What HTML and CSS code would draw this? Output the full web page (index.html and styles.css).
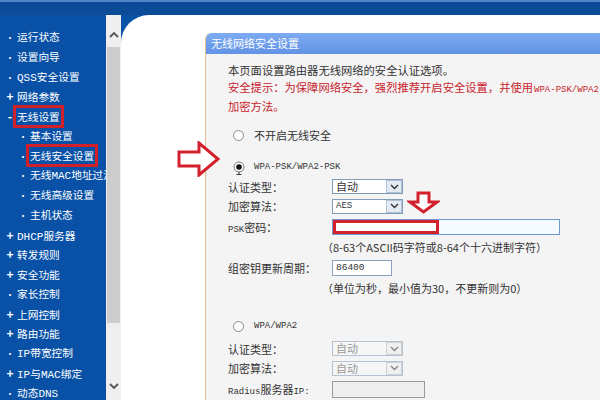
FILE: index.html
```html
<!DOCTYPE html>
<html lang="zh-CN">
<head>
  <meta charset="UTF-8">
  <meta name="viewport" content="width=device-width, initial-scale=1">
  <title>无线网络安全设置</title>
  <link rel="stylesheet" href="styles.css">
</head>
<body>
  <div class="topbar"></div>
  <div class="layout">
    <ul class="menu">
      <li><span class="mark">•</span>运行状态</li>
      <li><span class="mark">•</span>设置向导</li>
      <li><span class="mark">•</span><span class="en">QSS</span>安全设置</li>
      <li><span class="mark plus">+</span>网络参数</li>
      <li><span class="mark plus">-</span><span class="boxed">无线设置</span></li>
      <li class="sub"><span class="mark">•</span>基本设置</li>
      <li class="sub"><span class="mark">•</span><span class="boxed">无线安全设置</span></li>
      <li class="sub"><span class="mark">•</span>无线<span class="en">MAC</span>地址过滤</li>
      <li class="sub"><span class="mark">•</span>无线高级设置</li>
      <li class="sub"><span class="mark">•</span>主机状态</li>
      <li><span class="mark plus">+</span><span class="en">DHCP</span>服务器</li>
      <li><span class="mark plus">+</span>转发规则</li>
      <li><span class="mark plus">+</span>安全功能</li>
      <li><span class="mark">•</span>家长控制</li>
      <li><span class="mark plus">+</span>上网控制</li>
      <li><span class="mark plus">+</span>路由功能</li>
      <li><span class="mark">•</span><span class="en">IP</span>带宽控制</li>
      <li><span class="mark plus">+</span><span class="en">IP</span>与<span class="en">MAC</span>绑定</li>
      <li><span class="mark">•</span>动态<span class="en">DNS</span></li>
    </ul>

    <div class="scroll">
      <svg class="scroll-arrow" width="10" height="7" viewBox="0 0 10 7"><polyline points="1,6 5,2 9,6" fill="none" stroke="#555" stroke-width="1.8"/></svg>
      <div class="thumb"></div>
      <svg class="scroll-arrow down" width="10" height="7" viewBox="0 0 10 7"><polyline points="1,1 5,5 9,1" fill="none" stroke="#555" stroke-width="1.8"/></svg>
    </div>

    <div class="main">
      <div class="panel">
        <div class="panel-head">无线网络安全设置</div>
        <div class="panel-body">
          <p class="intro">本页面设置路由器无线网络的安全认证选项。</p>
          <p class="intro warn">安全提示：为保障网络安全，强烈推荐开启安全设置，并使用<span class="en">WPA-PSK/WPA2-PSK AES</span></p>
          <p class="intro warn">加密方法。</p>

          <div class="radio-row first">
            <span class="radio"></span>
            <span>不开启无线安全</span>
          </div>

          <div class="radio-row second">
            <svg class="radio-on" width="12" height="14" viewBox="0 0 12 14">
              <circle cx="6" cy="6" r="5" fill="#fff" stroke="#777" stroke-width="1"/>
              <circle cx="6" cy="6" r="2.8" fill="#111"/>
              <line x1="6" y1="11" x2="6" y2="13.5" stroke="#333" stroke-width="1"/>
              <line x1="3.5" y1="13.5" x2="8.5" y2="13.5" stroke="#333" stroke-width="1"/>
            </svg>
            <span class="en">WPA-PSK/WPA2-PSK</span>
          </div>

          <div class="field">
            <span class="label">认证类型：</span>
            <div class="select"><span class="val">自动</span><span class="btn"><svg width="9" height="6" viewBox="0 0 9 6"><polyline points="1,1 4.5,4.5 8,1" fill="none" stroke="#333" stroke-width="1.4"/></svg></span></div>
          </div>
          <div class="field">
            <span class="label">加密算法：</span>
            <div class="select"><span class="val en">AES</span><span class="btn"><svg width="9" height="6" viewBox="0 0 9 6"><polyline points="1,1 4.5,4.5 8,1" fill="none" stroke="#333" stroke-width="1.4"/></svg></span></div>
          </div>
          <div class="field tall">
            <span class="label"><span class="en">PSK</span>密码：</span>
            <div class="input psk"><span class="hide"></span></div>
          </div>
          <div class="note">（8-63个ASCII码字符或8-64个十六进制字符）</div>
          <div class="field mid">
            <span class="label">组密钥更新周期：</span>
            <div class="input period en">86400</div>
          </div>
          <div class="note">（单位为秒，最小值为30，不更新则为0）</div>

          <div class="radio-row third">
            <span class="radio"></span>
            <span class="en">WPA/WPA2</span>
          </div>

          <div class="field gap">
            <span class="label">认证类型：</span>
            <div class="select off"><span class="val">自动</span><span class="btn"><svg width="9" height="6" viewBox="0 0 9 6"><polyline points="1,1 4.5,4.5 8,1" fill="none" stroke="#888" stroke-width="1.4"/></svg></span></div>
          </div>
          <div class="field">
            <span class="label">加密算法：</span>
            <div class="select off"><span class="val">自动</span><span class="btn"><svg width="9" height="6" viewBox="0 0 9 6"><polyline points="1,1 4.5,4.5 8,1" fill="none" stroke="#888" stroke-width="1.4"/></svg></span></div>
          </div>
          <div class="field radius">
            <span class="label"><span class="en">Radius</span>服务器<span class="en">IP:</span></span>
            <div class="input server"></div>
          </div>
          <div class="field radius">
            <span class="label"><span class="en">Radius</span>端口:</span>
            <div class="input port"></div>
            <span class="hint">（1-65535，0表示默认端口：1812）</span>
          </div>
        </div>
      </div>
    </div>
  </div>

  <!-- red marks drawn over the screenshot -->
  <svg class="arrow-right" width="44" height="36" viewBox="0 0 44 36">
    <polygon points="2,11 22,11 22,2 41,18 22,34 22,25 2,25" fill="#fff" stroke="#d3202d" stroke-width="3" stroke-linejoin="miter"/>
  </svg>
  <svg class="arrow-down" width="33" height="24" viewBox="0 0 33 24">
    <polygon points="11,2 22,2 22,11 30,11 16.5,21 3,11 11,11" fill="#fff" stroke="#d3202d" stroke-width="3"/>
  </svg>
</body>
</html>
```

FILE: styles.css
```css
* {
  box-sizing: border-box;
}

body {
  margin: 0;
  height: 400px;
  overflow: hidden;
  background: #0851a6;
  font-family: "Noto Sans CJK SC", "Noto Sans", sans-serif;
  font-size: 11px;
  color: #333;
}

.en {
  font-family: "Liberation Mono", monospace;
}

.topbar {
  height: 15px;
  background: #0c4b97;
  border-top: 2px solid #4f87c6;
}

.layout {
  display: flex;
  height: 385px;
}

/* left menu */
.menu {
  width: 106px;
  margin: 0;
  padding: 12px 0 0 3px;
  list-style: none;
  overflow: hidden;
  white-space: nowrap;
  color: #fff;
  font-size: 10.7px;
}

.menu li {
  height: 19.78px;
  line-height: 19.78px;
}

.menu li.sub {
  padding-left: 13px;
}

.menu .en {
  font-size: 11px;
}

.mark {
  display: inline-block;
  width: 14px;
  text-align: center;
  font-size: 9px;
}

.mark.plus {
  font-size: 12px;
  font-weight: bold;
}

.boxed {
  outline: 3px solid #d2202b;
  outline-offset: 1px;
}

/* scrollbar */
.scroll {
  width: 15px;
  background: #efefef;
  display: flex;
  flex-direction: column;
  align-items: center;
  padding: 16px 0 10px;
}

.thumb {
  width: 13px;
  height: 276px;
  margin-top: 9px;
  background: #cdcdcd;
}

.scroll-arrow.down {
  margin-top: auto;
}

/* main area */
.main {
  flex: 1;
  background: #fff;
  border-top-left-radius: 28px;
  padding: 18px 0 0 84px;
  overflow: hidden;
}

.panel {
  width: 560px;
  height: 400px;
  background: #f4f4f4;
  border-left: 1px solid #e2bf91;
  border-top-left-radius: 6px;
}

.panel-head {
  height: 21px;
  line-height: 21px;
  padding-left: 5px;
  color: #fff;
  background: linear-gradient(#7dabf2, #6393e6);
  border-top-left-radius: 6px;
}

.panel-body {
  padding: 8px 0 0 22px;
  white-space: nowrap;
}

.intro {
  margin: 0;
  line-height: 16.5px;
  font-size: 11.3px;
}

.warn {
  color: #c8232c;
}

.warn .en {
  font-size: 9px;
  margin-left: 1px;
}

.radio-row {
  display: flex;
  align-items: center;
  height: 20px;
  padding-left: 5px;
  gap: 9px;
}

.radio-row .en {
  font-size: 9px;
}

.radio-row.first {
  margin-top: 10.5px;
}

.radio-row.second {
  margin-top: 12px;
}

.radio-row.third {
  margin-top: 18px;
}

.radio {
  width: 11px;
  height: 11px;
  border: 1px solid #8a8a8a;
  border-radius: 50%;
  background: #fff;
  margin-right: 1px;
}

.radio-on {
  margin-top: 2px;
}

.field {
  display: flex;
  align-items: center;
  height: 19.5px;
}

.field.tall {
  height: 22px;
}

.field.mid {
  height: 21px;
}

.field.gap {
  margin-top: 3px;
}

.field.radius {
  height: 22px;
}

.label {
  width: 104px;
}

.label .en {
  font-size: 9px;
}

.select {
  display: flex;
  width: 71px;
  height: 15px;
  border: 1px solid #7f9db9;
  background: #fff;
}

.select .val {
  flex: 1;
  padding-left: 3px;
  line-height: 13px;
}

.select .val.en {
  font-size: 9px;
}

.select .btn {
  width: 16px;
  display: flex;
  align-items: center;
  justify-content: center;
  background: #e4ebf5;
  border: 1px solid #b3c1d6;
}

.select.off {
  border-color: #b5c2d0;
  background: #f6f6f6;
  color: #999;
}

.select.off .btn {
  background: #f0f0f0;
  border-color: #d0d0d0;
}

.input {
  height: 16px;
  border: 1px solid #8aa2bf;
  background: #fff;
}

.input.psk {
  position: relative;
  width: 228px;
  background: #f4faff;
  border-color: #6f9ad0;
}

.hide {
  position: absolute;
  left: 0;
  top: 0;
  width: 106px;
  height: 14px;
  border: 3px solid #d3202d;
  background: #fff;
}

.input.period {
  width: 60px;
  padding-left: 3px;
  line-height: 14px;
  font-size: 9.5px;
}

.input.server {
  width: 93px;
  height: 17px;
  background: #efefef;
  border-color: #9a9a9a;
}

.input.port {
  width: 40px;
  height: 17px;
  background: #efefef;
  border-color: #9a9a9a;
}

.hint {
  margin-left: 6px;
}

.note {
  height: 19.5px;
  line-height: 19.5px;
  padding-left: 94px;
}

/* overlay marks */
.arrow-right {
  position: absolute;
  left: 177px;
  top: 141px;
}

.arrow-down {
  position: absolute;
  left: 407px;
  top: 191px;
}
```
